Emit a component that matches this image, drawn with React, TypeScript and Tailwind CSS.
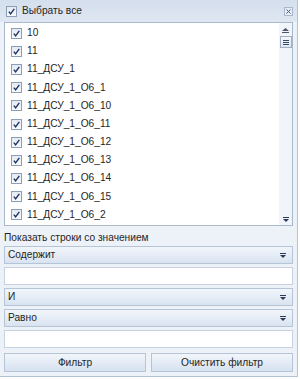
const items = [
  "10",
  "11",
  "11_ДСУ_1",
  "11_ДСУ_1_О6_1",
  "11_ДСУ_1_О6_10",
  "11_ДСУ_1_О6_11",
  "11_ДСУ_1_О6_12",
  "11_ДСУ_1_О6_13",
  "11_ДСУ_1_О6_14",
  "11_ДСУ_1_О6_15",
  "11_ДСУ_1_О6_2",
];

function Check() {
  return (
    <span className="flex h-[11px] w-[11px] shrink-0 items-center justify-center border border-[#8d9fb8] bg-gradient-to-b from-[#e4eaf2] to-[#f8fafd]">
      <svg width="9" height="9" viewBox="0 0 9 9">
        <path d="M1.8 4.6 L3.6 6.8 L7.3 1.8" fill="none" stroke="#1f3563" strokeWidth="1.4" />
      </svg>
    </span>
  );
}

function Arrow() {
  return (
    <svg width="6" height="5" viewBox="0 0 6 5" className="shrink-0">
      <rect x="0" y="0" width="6" height="1" fill="#2a3b55" />
      <path d="M0 2 H6 L3 5 Z" fill="#2a3b55" />
    </svg>
  );
}

function Select({ label }: { label: string }) {
  return (
    <div className="flex h-[18px] items-center justify-between border border-[#b6c4d7] bg-gradient-to-b from-[#f2f6fb] to-[#d9e3f0] pl-[3px] pr-[6px]">
      <span>{label}</span>
      <Arrow />
    </div>
  );
}

function Field() {
  return <div className="h-[18px] border border-[#c6d2e1] bg-white" />;
}

export default function App() {
  return (
    <div
      className="h-[379px] w-[300px] bg-white text-[10.2px] leading-none text-[#262626]"
      style={{ fontFamily: '"Liberation Sans", Arial, sans-serif' }}
    >
      <div className="flex h-[377px] w-[298px] flex-col border-r border-b border-[#b4c2d5] bg-[#edf1f8]">
        <div className="flex h-[22px] items-center bg-gradient-to-b from-[#d4dfed] to-[#dfe7f2] pl-[6px] pr-[4px]">
          <Check />
          <span className="ml-[5px]">Выбрать все</span>
          <span className="ml-auto flex h-[9px] w-[9px] items-center justify-center border border-[#a9b8cc] bg-[#e7edf5]">
            <svg width="5" height="5" viewBox="0 0 5 5">
              <path d="M0.5 0.5 L4.5 4.5 M4.5 0.5 L0.5 4.5" stroke="#4a5b74" strokeWidth="1" />
            </svg>
          </span>
        </div>

        <div className="mx-[4px] flex h-[204px] border border-[#a9b8cb] bg-white">
          <div className="flex-1 pt-[1px] pl-[6px]">
            {items.map((t) => (
              <div key={t} className="flex h-[18.2px] items-center gap-[5px]">
                <Check />
                <span>{t}</span>
              </div>
            ))}
          </div>
          <div className="flex w-[13px] flex-col items-center bg-[#f1f4fa] pt-[5px] pb-[3px]">
            <svg width="7" height="5" viewBox="0 0 7 5">
              <path d="M3.5 0 L7 3 H0 Z" fill="#4a566a" />
              <rect x="0" y="4" width="7" height="1" fill="#4a566a" />
            </svg>
            <div className="mt-[3px] flex h-[12px] w-[12px] flex-col items-center justify-center gap-[1px] border border-[#9fb0c6] bg-gradient-to-b from-[#f4f7fb] to-[#dfe7f2]">
              <span className="h-[1px] w-[6px] bg-[#3b4a60]" />
              <span className="h-[1px] w-[6px] bg-[#3b4a60]" />
              <span className="h-[1px] w-[6px] bg-[#3b4a60]" />
            </div>
            <div className="mt-auto">
              <Arrow />
            </div>
          </div>
        </div>

        <div className="mt-[7px] px-[4px]">Показать строки со значением</div>

        <div className="mt-[3px] flex flex-col gap-[3px] px-[4px]">
          <Select label="Содержит" />
          <Field />
          <Select label="И" />
          <Select label="Равно" />
          <Field />
        </div>

        <div className="mt-[5px] grid grid-cols-2 gap-[5px] px-[4px]">
          <div className="flex h-[19px] items-center justify-center border border-[#b6c4d7] bg-gradient-to-b from-[#f2f6fb] to-[#d6e1ef]">
            Фильтр
          </div>
          <div className="flex h-[19px] items-center justify-center border border-[#b6c4d7] bg-gradient-to-b from-[#f2f6fb] to-[#d6e1ef]">
            Очистить фильтр
          </div>
        </div>
      </div>
    </div>
  );
}
